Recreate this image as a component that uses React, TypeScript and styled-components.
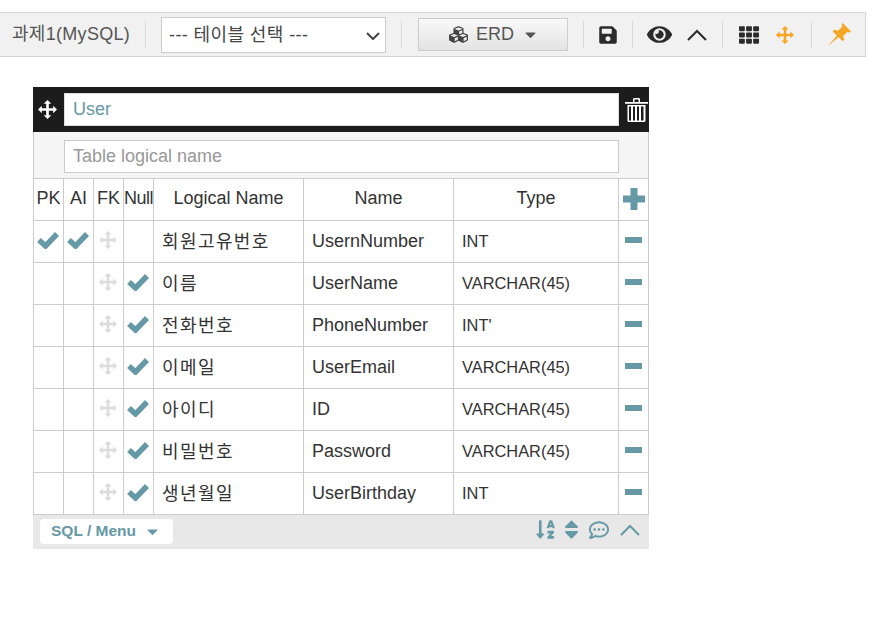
import React from 'react';
import styled, {createGlobalStyle} from 'styled-components';
import {FaCubes, FaSave, FaEye, FaTh, FaSortAlphaDown, FaSort, FaRegCommentDots, FaCaretDown} from 'react-icons/fa';

const TEAL = '#6599a6';
const FONT = '"Liberation Sans", "Noto Sans CJK KR", sans-serif';

const GlobalStyle = createGlobalStyle`
  html, body {
    margin: 0;
    padding: 0;
    background: #fff;
    font-family: ${FONT};
  }
`;

const Page = styled.div`
  width: 885px;
  height: 631px;
  padding-top: 12px;
  box-sizing: border-box;
  overflow: hidden;
`;

const Toolbar = styled.div`
  width: 866px;
  height: 45px;
  box-sizing: border-box;
  display: flex;
  align-items: center;
  background: #f1f1f1;
  border: 1px solid #d4d4d4;
  border-left: none;
  padding-left: 12px;
`;

const ProjectName = styled.span`
  font-size: 18px;
  letter-spacing: 0.3px;
  color: #555;
  white-space: nowrap;
  width: 118px;
  padding-bottom: 5px;
`;

const Divider = styled.span<{$l: number; $r: number}>`
  width: 1px;
  height: 27px;
  background: #d8d8d8;
  margin: 0 ${p => p.$r}px 0 ${p => p.$l}px;
  flex: none;
`;

const SelectWrap = styled.div`
  position: relative;
  width: 225px;
  height: 36px;
  flex: none;
`;

const TableSelect = styled.select`
  width: 100%;
  height: 100%;
  box-sizing: border-box;
  appearance: none;
  border: 1px solid #ccc;
  border-radius: 0;
  background: #fff;
  color: #444;
  font: 18px ${FONT};
  letter-spacing: 0.4px;
  padding: 0 0 0 7px;
`;

const SelectArrow = styled.svg`
  position: absolute;
  right: 6px;
  top: 15px;
  pointer-events: none;
`;

const ErdButton = styled.button`
  width: 150px;
  height: 33px;
  box-sizing: border-box;
  display: flex;
  align-items: center;
  justify-content: center;
  gap: 8px;
  border: 1px solid #ccc;
  background: linear-gradient(#f9f9f9, #e3e3e3);
  color: #555;
  font: 18px ${FONT};
  flex: none;
  padding: 0 0 0 2px;
`;

const ToolIcon = styled.span<{$color?: string; $size: number; $mr?: number}>`
  display: inline-flex;
  color: ${p => p.$color || '#2b2b2b'};
  font-size: ${p => p.$size}px;
  margin-right: ${p => p.$mr || 0}px;
  flex: none;
`;

const Canvas = styled.div`
  margin: 30px 0 0 33px;
  width: 616px;
`;

const TitleBar = styled.div`
  height: 45px;
  box-sizing: border-box;
  background: #1c1c1c;
  display: flex;
  align-items: center;
  color: #fff;
  padding-left: 5px;
`;

const TitleInput = styled.input`
  width: 555px;
  height: 33px;
  box-sizing: border-box;
  margin: 0 6px 0 7px;
  border: 1px solid #ddd;
  padding: 0 8px;
  font: 18px ${FONT};
  color: ${TEAL};
  background: #fff;
  outline: none;
`;

const LogicalBar = styled.div`
  height: 46px;
  box-sizing: border-box;
  background: #f5f5f5;
  border-left: 1px solid #ccc;
  border-right: 1px solid #ccc;
  display: flex;
  align-items: center;
  padding: 2px 0 0 30px;
`;

const LogicalInput = styled.input`
  width: 555px;
  height: 33px;
  box-sizing: border-box;
  border: 1px solid #ccc;
  padding: 0 8px;
  font: 18px ${FONT};
  background: #fff;
  outline: none;
  &::placeholder {
    color: #999;
    opacity: 1;
  }
`;

const Grid = styled.table`
  border-collapse: collapse;
  table-layout: fixed;
  width: 615px;
  font-size: 18px;
  color: #333;
`;

const HeadCell = styled.th<{$tight?: boolean}>`
  height: 42px;
  box-sizing: border-box;
  border: 1px solid #ccc;
  font-weight: 400;
  padding: 0 0 2px;
  text-align: center;
  white-space: nowrap;
  letter-spacing: ${p => (p.$tight ? '-0.5px' : '0')};
`;

const Cell = styled.td<{$small?: boolean; $korean?: boolean}>`
  height: 42px;
  box-sizing: border-box;
  border: 1px solid #ccc;
  padding: 0 0 ${p => (p.$korean ? '3px' : '0')} 8px;
  white-space: nowrap;
  font-size: ${p => (p.$small ? '16.4px' : '18px')};
  letter-spacing: ${p => (p.$korean ? '1.4px' : '0')};
`;

const IconCell = styled.td`
  height: 42px;
  box-sizing: border-box;
  border: 1px solid #ccc;
  padding: 0 1px 4px 0;
  text-align: center;
  line-height: 0;
`;

const Footer = styled.div`
  height: 34px;
  box-sizing: border-box;
  background: #e8e8e8;
  display: flex;
  align-items: center;
  padding: 0 9px 5px 7px;
  color: ${TEAL};
`;

const MenuButton = styled.div`
  width: 133px;
  height: 25px;
  box-sizing: border-box;
  background: #fff;
  border-radius: 4px;
  display: flex;
  align-items: center;
  padding-left: 11px;
  gap: 8px;
  font-size: 15.5px;
  font-weight: 700;
  margin-top: 3px;
`;

const FooterIcons = styled.div`
  margin-left: auto;
  display: flex;
  align-items: center;
`;

const MoveIcon = ({size, color}: {size: number; color: string}) => (
  <svg width={size} height={size} viewBox="0 0 20 20" fill={color}>
    <path d="M10 0l4 4h-2.6v4.6H16V6l4 4-4 4v-2.6h-4.6V16H14l-4 4-4-4h2.6v-4.6H4V14l-4-4 4-4v2.6h4.6V4H6z" />
  </svg>
);

const ChevronUp = ({width, color, stroke}: {width: number; color: string; stroke: number}) => (
  <svg width={width} height={width * 0.6} viewBox="0 0 20 12" fill="none" stroke={color} strokeWidth={stroke}>
    <path d="M1 11l9-9 9 9" />
  </svg>
);

const PinIcon = () => (
  <svg width={25} height={25} viewBox="0 0 24 24" fill="#f5a623">
    <path d="M15 1l8 8-1.500 1-2-.5-4 4 1 3.500-1.500 1.500-4-4L1 23l8.500-10-4-4L7 7.500l3.500 1 4-4-.5-2z" />
  </svg>
);

const TrashIcon = () => (
  <svg width={23} height={26} viewBox="0 0 23 26" fill="#fff">
    <path d="M0 5h8V2.500C8 1.400 8.800 1 9.600 1h3.800c.8 0 1.600.4 1.600 1.500V5h8v1.800H0zM9.500 5h4V2.600h-4z" fillRule="evenodd" />
    <path d="M2.500 8h18v15.500c0 1-.7 1.500-1.500 1.500H4c-.8 0-1.500-.5-1.500-1.500zM4 9.500V23.500h2V9.500zm4 0V23.500h2V9.500zm4 0V23.500h2V9.500zm4 0V23.500h2.500V9.500z" fillRule="evenodd" />
  </svg>
);

const CheckIcon = () => (
  <svg width={22} height={18} viewBox="0 0 22 18" fill="none" stroke={TEAL} strokeWidth={5.5}>
    <path d="M2 9l6.500 6L20 3" />
  </svg>
);

const PlusIcon = () => (
  <svg width={22} height={22} viewBox="0 0 22 22" fill={TEAL} style={{verticalAlign: 'middle'}}>
    <path d="M7.500 0h7v7.500H22v7h-7.500V22h-7v-7.500H0v-7h7.500z" />
  </svg>
);

const MinusIcon = () => (
  <svg width={17} height={6} viewBox="0 0 17 6" fill={TEAL}>
    <rect width={17} height={6} />
  </svg>
);

const rows = [
  {pk: true, nul: false, logical: '회원고유번호', name: 'UsernNumber', type: 'INT'},
  {pk: false, nul: true, logical: '이름', name: 'UserName', type: 'VARCHAR(45)'},
  {pk: false, nul: true, logical: '전화번호', name: 'PhoneNumber', type: "INT'"},
  {pk: false, nul: true, logical: '이메일', name: 'UserEmail', type: 'VARCHAR(45)'},
  {pk: false, nul: true, logical: '아이디', name: 'ID', type: 'VARCHAR(45)'},
  {pk: false, nul: true, logical: '비밀번호', name: 'Password', type: 'VARCHAR(45)'},
  {pk: false, nul: true, logical: '생년월일', name: 'UserBirthday', type: 'INT'},
];

function App() {
  return (
    <Page>
      <GlobalStyle />
      <Toolbar>
        <ProjectName>과제1(MySQL)</ProjectName>
        <Divider $l={15} $r={15} />
        <SelectWrap>
          <TableSelect defaultValue="none">
            <option value="none">--- 테이블 선택 ---</option>
          </TableSelect>
          <SelectArrow width={14} height={8} viewBox="0 0 14 8" fill="none" stroke="#444" strokeWidth={2}>
            <path d="M1 1l6 6 6-6" />
          </SelectArrow>
        </SelectWrap>
        <Divider $l={15} $r={16} />
        <ErdButton>
          <FaCubes size={19} color="#444" />
          ERD
          <FaCaretDown size={17} color="#555" />
        </ErdButton>
        <Divider $l={15} $r={14} />
        <ToolIcon $size={20}><FaSave /></ToolIcon>
        <Divider $l={14} $r={14} />
        <ToolIcon $size={25} $mr={15}><FaEye /></ToolIcon>
        <ToolIcon $size={20}><ChevronUp width={20} color="#2b2b2b" stroke={2} /></ToolIcon>
        <Divider $l={15} $r={16} />
        <ToolIcon $size={20} $mr={17}><FaTh /></ToolIcon>
        <ToolIcon $size={18}><MoveIcon size={18} color="#f5a623" /></ToolIcon>
        <Divider $l={17} $r={15} />
        <ToolIcon $size={25}><PinIcon /></ToolIcon>
      </Toolbar>
      <Canvas>
        <TitleBar>
          <MoveIcon size={19} color="#fff" />
          <TitleInput defaultValue="User" />
          <TrashIcon />
        </TitleBar>
        <LogicalBar>
          <LogicalInput placeholder="Table logical name" />
        </LogicalBar>
        <Grid>
          <colgroup>
            <col width={30} />
            <col width={30} />
            <col width={30} />
            <col width={30} />
            <col width={150} />
            <col width={150} />
            <col width={165} />
            <col width={30} />
          </colgroup>
          <thead>
            <tr>
              <HeadCell>PK</HeadCell>
              <HeadCell>AI</HeadCell>
              <HeadCell>FK</HeadCell>
              <HeadCell $tight>Null</HeadCell>
              <HeadCell>Logical Name</HeadCell>
              <HeadCell>Name</HeadCell>
              <HeadCell>Type</HeadCell>
              <HeadCell><PlusIcon /></HeadCell>
            </tr>
          </thead>
          <tbody>
            {rows.map(r => (
              <tr key={r.name}>
                <IconCell>{r.pk && <CheckIcon />}</IconCell>
                <IconCell>{r.pk && <CheckIcon />}</IconCell>
                <IconCell><MoveIcon size={18} color="#dcdcdc" /></IconCell>
                <IconCell>{r.nul && <CheckIcon />}</IconCell>
                <Cell $korean>{r.logical}</Cell>
                <Cell>{r.name}</Cell>
                <Cell $small>{r.type}</Cell>
                <IconCell><MinusIcon /></IconCell>
              </tr>
            ))}
          </tbody>
        </Grid>
        <Footer>
          <MenuButton>
            SQL / Menu
            <FaCaretDown size={17} />
          </MenuButton>
          <FooterIcons>
            <ToolIcon $color={TEAL} $size={21} $mr={4}><FaSortAlphaDown /></ToolIcon>
            <ToolIcon $color={TEAL} $size={23} $mr={6}><FaSort /></ToolIcon>
            <ToolIcon $color={TEAL} $size={20} $mr={11}><FaRegCommentDots /></ToolIcon>
            <ChevronUp width={20} color={TEAL} stroke={2} />
          </FooterIcons>
        </Footer>
      </Canvas>
    </Page>
  );
}

export default App;
